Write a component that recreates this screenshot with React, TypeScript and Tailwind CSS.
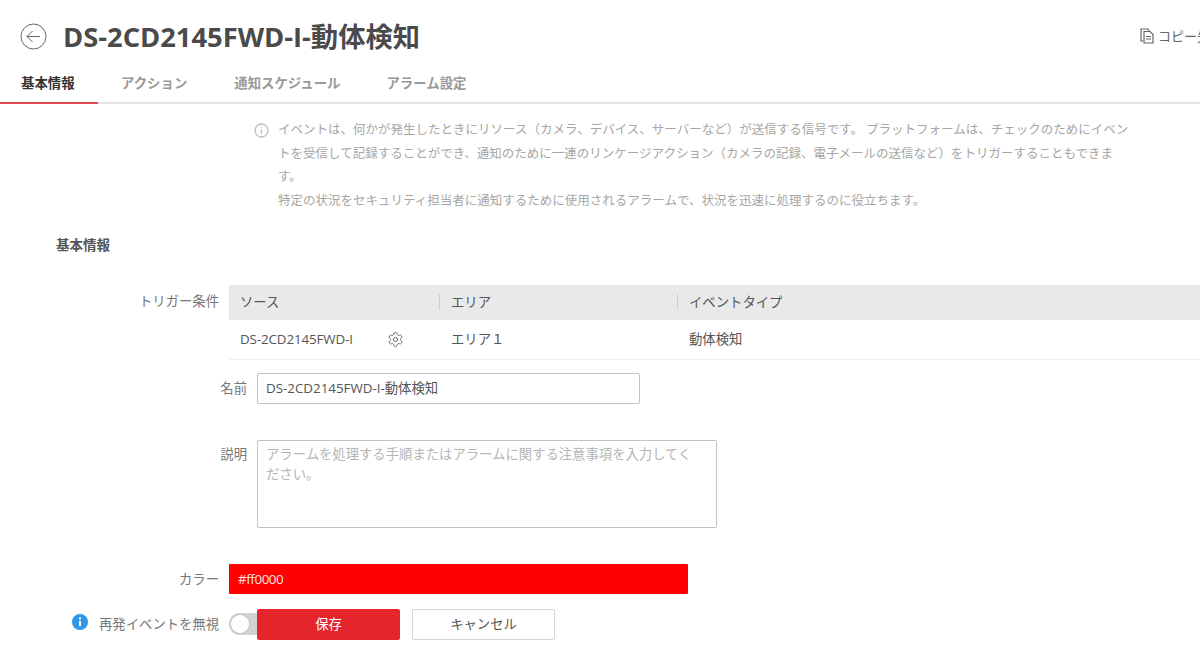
import { Settings } from "lucide-react";

const font = "font-['Open_Sans','Noto_Sans_CJK_JP',sans-serif]";

function BackIcon() {
  return (
    <svg width="27" height="27" viewBox="0 0 27 27" fill="none" stroke="#666" strokeWidth="1">
      <circle cx="13.5" cy="13.5" r="12.5" />
      <path d="M20 13.5H7M12.5 8L7 13.5l5.5 5.5" />
    </svg>
  );
}

function CopyIcon() {
  return (
    <svg width="15" height="16" viewBox="0 0 15 16" fill="none" stroke="#666" strokeWidth="1.2">
      <path d="M3 13H1V1h7l1 2" />
      <path d="M4 3.5h6l3 3V15H4z" />
      <path d="M6 8.5h5M6 11h5" />
    </svg>
  );
}

function InfoOutline() {
  return (
    <svg width="15" height="15" viewBox="0 0 15 15" fill="none" stroke="#bdbdbd" strokeWidth="1.3">
      <circle cx="7.5" cy="7.5" r="6.5" />
      <path d="M7.5 6.5v4.5M7.5 3.8v1.4" />
    </svg>
  );
}

function InfoFilled() {
  return (
    <svg width="16" height="16" viewBox="0 0 16 16">
      <circle cx="8" cy="8" r="8" fill="#2f96e8" />
      <path d="M8 7v5M8 3.6v1.8" stroke="#fff" strokeWidth="2" />
    </svg>
  );
}

export default function App() {
  return (
    <div className={`${font} w-[1200px] h-[646px] overflow-hidden bg-white text-[#555]`}>
      {/* Header */}
      <header className="h-[104px] border-b-2 border-[#e4e4e4]">
        <div className="flex items-center h-[63px] pt-[10px] pl-[20px] relative">
          <BackIcon />
          <h1 className="ml-[16px] text-[27.3px] leading-none font-bold text-[#4a4a4a] whitespace-nowrap">
            DS-2CD2145FWD-I-動体検知
          </h1>
          <div className="absolute left-[1140px] top-[28px] flex items-center gap-[3px] text-[13px] leading-none whitespace-nowrap text-[#666]">
            <CopyIcon />
            <span>コピー先</span>
          </div>
        </div>
        <nav className="flex h-[41px] text-[13.4px] font-bold text-[#999]">
          <div className="w-[98px] h-[41px] pl-[21px] pt-[10px] text-[#333] border-b-2 border-[#e0484d]">基本情報</div>
          <div className="ml-[23px] pt-[10px]">アクション</div>
          <div className="ml-[47px] pt-[10px]">通知スケジュール</div>
          <div className="ml-[46px] pt-[10px]">アラーム設定</div>
        </nav>
      </header>

      {/* Notice */}
      <div className="flex mt-[14px] ml-[254px] w-[880px] text-[12.5px] leading-[23.7px] text-[#a6a6a6]">
        <div className="w-[24px] shrink-0 pt-[5px]">
          <InfoOutline />
        </div>
        <p>
          イベントは、何かが発生したときにリソース（カメラ、デバイス、サーバーなど）が送信する信号です。 プラットフォームは、チェックのためにイベントを受信して記録することができ、通知のために一連のリンケージアクション（カメラの記録、電子メールの送信など）をトリガーすることもできます。
          <br />
          特定の状況をセキュリティ担当者に通知するために使用されるアラームで、状況を迅速に処理するのに役立ちます。
        </p>
      </div>

      <h2 className="mt-[22px] ml-[56px] text-[13.5px] leading-[20px] font-bold text-[#555]">基本情報</h2>

      {/* Trigger condition table */}
      <div className="flex mt-[30px]">
        <div className="w-[219px] pt-[6px] text-right text-[13.35px] leading-[20px] text-[#777]">トリガー条件</div>
        <div className="ml-[10px] flex-1">
          <div className="flex items-center h-[35px] bg-[#e9e9e9] text-[13.35px] text-[#555]">
            <div className="w-[210px] pl-[11px]">ソース</div>
            <div className="w-[238px] pl-[11px] border-l border-[#cfcfcf] leading-[16px]">エリア</div>
            <div className="flex-1 pl-[11px] border-l border-[#cfcfcf] leading-[16px]">イベントタイプ</div>
          </div>
          <div className="flex items-center h-[40px] border-b border-[#eeeeee] text-[13.35px] text-[#555]">
            <div className="w-[210px] pl-[11px] flex items-center">
              <span className="w-[147px] tracking-[-0.1px] whitespace-nowrap">DS-2CD2145FWD-I</span>
              <Settings size={17} strokeWidth={1.3} color="#666" />
            </div>
            <div className="w-[238px] pl-[12px]">エリア１</div>
            <div className="flex-1 pl-[12px]">動体検知</div>
          </div>
        </div>
      </div>

      {/* Name */}
      <div className="flex items-center mt-[13px]">
        <div className="w-[247px] text-right text-[13.35px] text-[#777]">名前</div>
        <div className="ml-[10px] w-[383px] h-[31px] border border-[#c4c4c4] rounded-[2px] pl-[8px] text-[13.35px] leading-[29px] text-[#555] whitespace-nowrap">
          DS-2CD2145FWD-I-動体検知
        </div>
      </div>

      {/* Description */}
      <div className="flex mt-[36px]">
        <div className="w-[247px] pt-[4px] text-right text-[13.35px] leading-[20px] text-[#777]">説明</div>
        <div className="ml-[10px] w-[460px] h-[88px] border border-[#c4c4c4] rounded-[2px] pl-[8px] pr-[20px] py-[3px] text-[13.35px] leading-[20px] text-[#b5b5b5]">
          アラームを処理する手順またはアラームに関する注意事項を入力してください。
        </div>
      </div>

      {/* Color */}
      <div className="flex items-center mt-[36px]">
        <div className="w-[219px] text-right text-[13.35px] text-[#777]">カラー</div>
        <div className="ml-[10px] w-[459px] h-[30px] bg-[#ff0000] rounded-[1px] pl-[9px] text-[13.35px] leading-[30px] text-[#ffe0e0] tracking-[-0.4px]">
          #ff0000
        </div>
      </div>

      {/* Repeat event + footer buttons */}
      <div className="flex items-center mt-[15px] h-[31px]">
        <div className="ml-[72px] w-[27px] -mt-[4px]">
          <InfoFilled />
        </div>
        <div className="w-[120px] text-[13.35px] whitespace-nowrap text-[#777]">再発イベントを無視</div>
        <div className="ml-[10px] w-[34px] h-[22px] rounded-l-full bg-[#d2d2d2] flex items-center shrink-0">
          <div className="w-[22px] h-[22px] rounded-full bg-white border-2 border-[#cfcfcf]" />
        </div>
        <button className="relative -ml-[6px] w-[143px] h-[31px] bg-[#e4262c] rounded-[2px] text-[13.35px] text-white">保存</button>
        <button className="ml-[12px] w-[143px] h-[31px] bg-white border border-[#d6d6d6] rounded-[2px] text-[13.35px] text-[#555]">キャンセル</button>
      </div>
    </div>
  );
}
